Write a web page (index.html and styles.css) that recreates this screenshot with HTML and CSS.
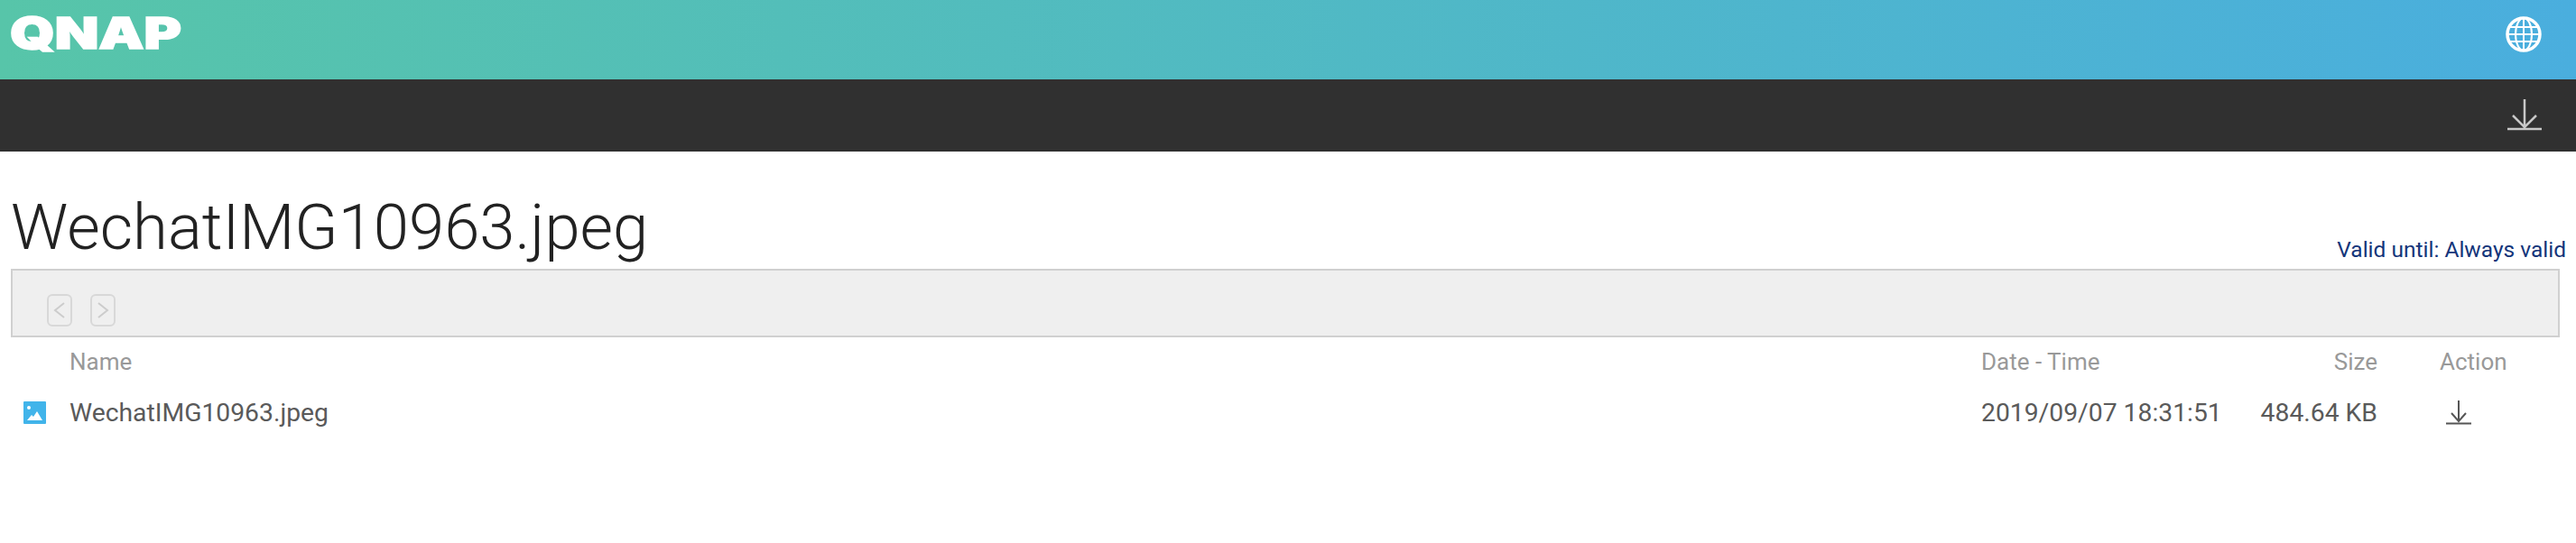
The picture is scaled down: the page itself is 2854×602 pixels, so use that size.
FILE: index.html
```html
<!DOCTYPE html>
<html lang="en">
<head>
  <meta charset="UTF-8" />
  <meta name="viewport" content="width=device-width, initial-scale=1.0" />
  <title>WechatIMG10963.jpeg</title>
  <link rel="stylesheet" href="styles.css">
</head>
<body>
  <!-- Top bars -->
  <header class="top-bar">
    <svg class="logo" width="192" height="66" viewBox="0 0 192 66">
      <text x="1" y="52" textLength="190" lengthAdjust="spacingAndGlyphs">QNAP</text>
    </svg>
    <svg class="globe" width="40" height="40" viewBox="0 0 40 40" fill="none" stroke="#fff">
      <circle cx="20" cy="20" r="18" stroke-width="3.500" />
      <ellipse cx="20" cy="20" rx="9" ry="18" stroke-width="2" />
      <path d="M20 2v36M4 12h32M2 20h36M4 28h32" stroke-width="2" />
    </svg>
  </header>
  <div class="tool-bar">
    <svg class="dl-big" width="40" height="40" viewBox="0 0 40 40" fill="none" stroke="#c8c8c8" stroke-width="2.500">
      <path d="M20 2v33M7 20l13 13 13-13M1 35h38" />
    </svg>
  </div>

  <!-- Share content -->
  <main class="content">
    <div class="title-row">
      <h1>WechatIMG10963.jpeg</h1>
      <span class="valid">Valid until: Always valid</span>
    </div>
    <div class="pager">
      <button class="page-btn">
        <svg width="14" height="22" viewBox="0 0 14 22" fill="none" stroke="#ccc" stroke-width="2"><path d="M12 3L2 11l10 8" /></svg>
      </button>
      <button class="page-btn">
        <svg width="14" height="22" viewBox="0 0 14 22" fill="none" stroke="#ccc" stroke-width="2"><path d="M2 3l10 8-10 8" /></svg>
      </button>
    </div>
    <div class="file-table">
      <div class="file-row head">
        <span></span>
        <span>Name</span>
        <span>Date - Time</span>
        <span class="size">Size</span>
        <span class="action">Action</span>
      </div>
      <div class="file-row">
        <svg class="file-icon" width="25" height="25" viewBox="0 0 25 25">
          <rect width="25" height="25" rx="1" fill="#41b4ea" />
          <circle cx="6" cy="7" r="2" fill="#fff" />
          <path d="M4 21l5-6 2 2 4-6 6 10z" fill="#fff" />
        </svg>
        <span>WechatIMG10963.jpeg</span>
        <span>2019/09/07 18:31:51</span>
        <span class="size">484.64 KB</span>
        <span class="action">
          <svg class="dl-small" width="28" height="28" viewBox="0 0 28 28" fill="none" stroke="#555" stroke-width="2">
            <path d="M14 1v23M6 15l8 9 8-9M0 26.500h28" />
          </svg>
        </span>
      </div>
    </div>
  </main>
</body>
</html>
```

FILE: styles.css
```css
* {
  box-sizing: border-box;
}

body {
  margin: 0;
  font-family: Roboto, sans-serif;
  background: white;
}

.top-bar {
  height: 88px;
  padding: 2px 38px 0 10px;
  display: flex;
  justify-content: space-between;
  align-items: flex-start;
  background: linear-gradient(to right, #57c5a9, #4aaede);
}

.logo text {
  font-family: Inter, sans-serif;
  font-weight: 900;
  font-size: 48px;
  fill: white;
  stroke: white;
  stroke-width: 1.5px;
}

.globe {
  margin-top: 16px;
}

.tool-bar {
  height: 80px;
  padding: 20px 37px 0 0;
  display: flex;
  justify-content: flex-end;
  background: #303030;
}

.content {
  padding: 0 18px 0 12px;
}

.title-row {
  height: 130px;
  display: flex;
  justify-content: space-between;
  align-items: flex-end;
}

h1 {
  margin: 0 0 5px;
  font-size: 70.6px;
  font-weight: 300;
  line-height: 82px;
  color: #222;
}

.valid {
  margin-right: -7px;
  padding-bottom: 7px;
  font-size: 24.5px;
  color: #14357a;
}

.pager {
  height: 76px;
  padding: 26px 0 0 38px;
  display: flex;
  gap: 20px;
  background: #efefef;
  border: 2px solid #d0d0d0;
}

.page-btn {
  width: 28px;
  height: 36px;
  padding: 0;
  display: flex;
  justify-content: center;
  align-items: center;
  background: none;
  border: 2px solid #d8d8d8;
  border-radius: 6px;
}

.file-table {
  display: flex;
  flex-direction: column;
}

.file-row {
  display: grid;
  grid-template-columns: 65px 2118px 280px 159px 1fr;
  align-items: center;
  height: 58px;
  font-size: 28.3px;
  color: #5a5a5a;
}

.file-row.head {
  height: 54px;
  font-size: 26px;
  color: #999;
}

.file-icon {
  margin-left: 14px;
}

.size {
  justify-self: end;
  white-space: nowrap;
}

.action {
  margin-left: 69px;
  white-space: nowrap;
}

.dl-small {
  display: block;
  margin-left: 7px;
}
```
